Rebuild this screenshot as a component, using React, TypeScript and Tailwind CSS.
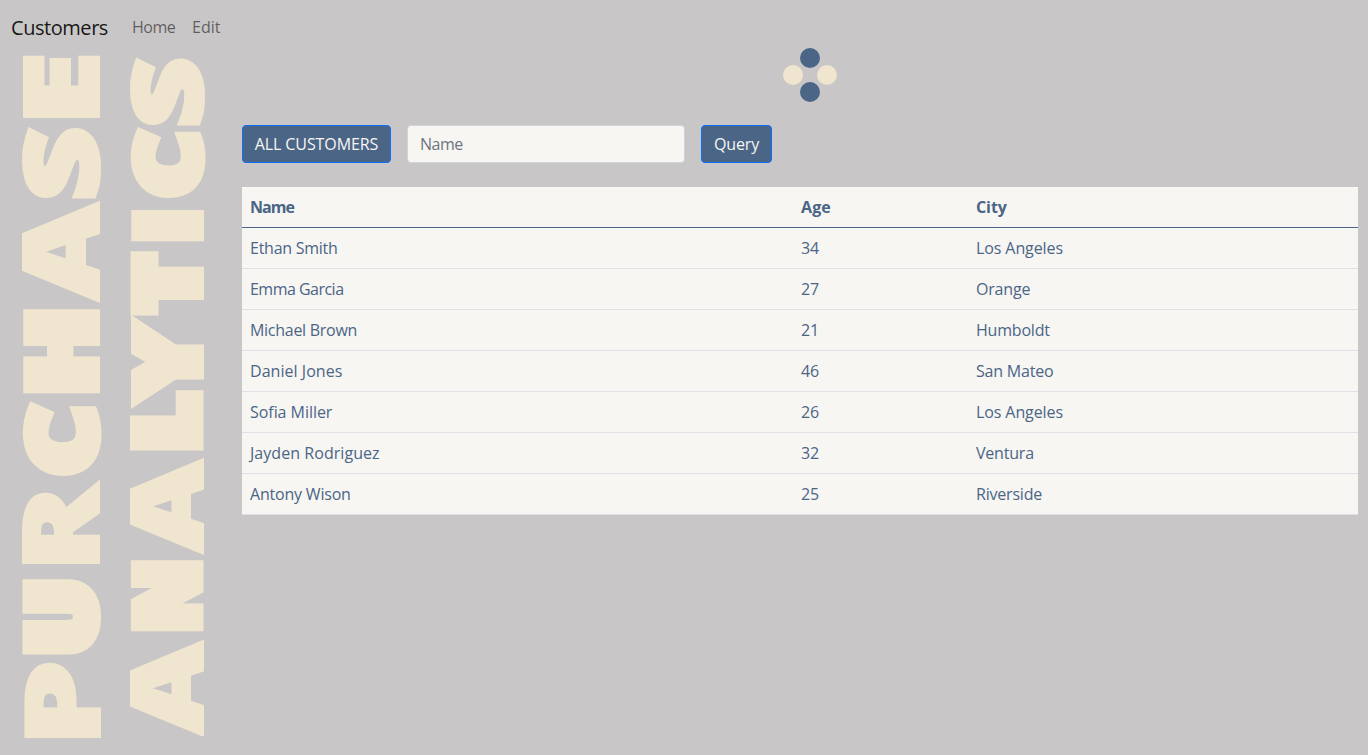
type Glyph = { char: string; start: number; end: number };

// Ink bounds of each capital as a fraction of the font size, and its outline weight in pixels.
const INK: Record<string, [number, number, number]> = {
  P: [0.07, 0.6, 3], U: [0.07, 0.69, 14], R: [0.07, 0.69, 4], C: [0.05, 0.62, 11], H: [0.07, 0.69, 12],
  A: [0, 0.73, 4], S: [0.04, 0.55, 6], E: [0.07, 0.51, 6], N: [0.07, 0.76, 13], L: [0.07, 0.55, 15],
  Y: [0, 0.67, 12], T: [0.02, 0.57, 15], I: [0.07, 0.28, 8],
};

const CAP_HEIGHT = 0.714;

// Start and end of each letter along the banner's baseline, in pixels.
const PURCHASE: Glyph[] = [
  { char: 'P', start: 0, end: 77 },
  { char: 'U', start: 84, end: 160.3 },
  { char: 'R', start: 174, end: 257.3 },
  { char: 'C', start: 263.3, end: 336.5 },
  { char: 'H', start: 345, end: 430 },
  { char: 'A', start: 437.5, end: 538.3 },
  { char: 'S', start: 540.3, end: 612 },
  { char: 'E', start: 620.5, end: 684.8 },
];

const ANALYTICS: Glyph[] = [
  { char: 'A', start: 3.3, end: 99.3 },
  { char: 'N', start: 107, end: 179 },
  { char: 'A', start: 185.5, end: 281.3 },
  { char: 'L', start: 288.3, end: 349.5 },
  { char: 'Y', start: 334.7, end: 419.7 },
  { char: 'T', start: 423, end: 488 },
  { char: 'I', start: 497, end: 530 },
  { char: 'C', start: 541, end: 610.7 },
  { char: 'S', start: 613.5, end: 681.7 },
];

function Banner({ glyphs, cap, className }: { glyphs: Glyph[]; cap: number; className: string }) {
  return (
    <h1
      className={`h-[684px] rotate-180 whitespace-nowrap font-['Open_Sans',sans-serif] font-extrabold leading-[108px] text-[#f0e5cf] [writing-mode:vertical-rl] ${className}`}
      style={{ fontSize: cap }}
    >
      {glyphs.map((g, i) => {
        const [l, r, stroke] = INK[g.char];
        const size = (cap - stroke) / CAP_HEIGHT;
        const scale = (g.end - g.start) / ((r - l) * size + stroke);
        const previous = i ? glyphs[i - 1].end : 0;
        return (
          <span
            key={i}
            className="inline-block origin-top"
            style={{
              fontSize: size,
              WebkitTextStroke: `${stroke}px #f0e5cf`,
              height: g.end - g.start,
              marginTop: g.start - previous,
              transform: `scaleY(${scale}) translateY(${stroke / 2 - l * size}px)`,
            }}
          >
            {g.char}
          </span>
        );
      })}
    </h1>
  );
}

const customers = [
  { name: 'Ethan Smith', age: 34, city: 'Los Angeles' },
  { name: 'Emma Garcia', age: 27, city: 'Orange' },
  { name: 'Michael Brown', age: 21, city: 'Humboldt' },
  { name: 'Daniel Jones', age: 46, city: 'San Mateo' },
  { name: 'Sofia Miller', age: 26, city: 'Los Angeles' },
  { name: 'Jayden Rodriguez', age: 32, city: 'Ventura' },
  { name: 'Antony Wison', age: 25, city: 'Riverside' },
];

const spacing: Record<string, string> = {
  'Ethan Smith': 'tracking-[-0.26px]',
  'Emma Garcia': 'tracking-[-0.52px]',
  'Michael Brown': 'tracking-[-0.28px]',
  'Daniel Jones': 'tracking-[0.04px]',
  'Sofia Miller': 'tracking-[-0.05px]',
  'Jayden Rodriguez': 'tracking-[0.05px]',
  'Los Angeles': 'tracking-[-0.1px]',
};

function Logo() {
  return (
    <div className="mx-auto grid h-[54px] w-[54px] rotate-45 grid-cols-[20px_20px] place-content-center gap-1">
      <span className="size-5 rounded-full bg-[#4b6587]" />
      <span className="size-5 rounded-full bg-[#f0e5cf]" />
      <span className="size-5 rounded-full bg-[#f0e5cf]" />
      <span className="size-5 rounded-full bg-[#4b6587]" />
    </div>
  );
}

export default function App() {
  return (
    <div className="flex h-[755px] flex-col overflow-hidden bg-[#c8c6c6] font-['Open_Sans',sans-serif] text-base">
      <nav className="flex h-12 shrink-0 items-center pl-[11px] pt-2">
        <a className="w-[121px] text-xl tracking-[-0.45px] text-black/90">Customers</a>
        <a className="mb-0.5 w-[60px] tracking-[-0.5px] text-black/55">Home</a>
        <a className="mb-0.5 text-black/55">Edit</a>
      </nav>
      <div className="flex">
        <aside className="flex w-[242px] shrink-0 pl-[4.5px] pt-[7px]">
          <Banner glyphs={PURCHASE} cap={77} className="w-[108px]" />
          <Banner glyphs={ANALYTICS} cap={73} className="-ml-[2px] w-[108px]" />
        </aside>
        <main className="w-[1116px]">
          <div className="w-[1136px]">
            <Logo />
          </div>
          <form className="mt-[23px] flex gap-4">
            <button type="button" className="h-[38px] w-[149px] rounded border border-[#0d6efd] bg-[#4b6587] tracking-[-0.1px] text-[#f7f6f2]">
              ALL CUSTOMERS
            </button>
            <input
              placeholder="Name"
              className="h-[38px] w-[278px] rounded border border-[#ced4da] bg-[#f7f6f2] px-3 tracking-[-0.5px] placeholder:text-[#6c757d]"
            />
            <button type="button" className="h-[38px] w-[71px] rounded border border-[#0d6efd] bg-[#4b6587] tracking-[-0.15px] text-[#f7f6f2]">
              Query
            </button>
          </form>
          <table className="mt-6 w-full table-fixed border-collapse bg-[#f7f6f2] text-left tracking-[-0.2px] text-[#4b6587]">
            <colgroup>
              <col className="w-[551px]" />
              <col className="w-[175px]" />
              <col />
            </colgroup>
            <thead>
              <tr className="h-10 border-b border-[#4b6587]">
                <th className="px-2 font-bold tracking-[-0.95px]">Name</th>
                <th className="px-2 font-bold tracking-[0.1px]">Age</th>
                <th className="px-2 font-bold tracking-[-0.1px]">City</th>
              </tr>
            </thead>
            <tbody>
              {customers.map((c) => (
                <tr key={c.name} className="h-[41px] border-b border-[#dee2e6]">
                  <td className={`px-2 ${spacing[c.name] ?? ''}`}>{c.name}</td>
                  <td className="px-2">{c.age}</td>
                  <td className={`px-2 ${spacing[c.city] ?? ''}`}>{c.city}</td>
                </tr>
              ))}
            </tbody>
          </table>
        </main>
      </div>
    </div>
  );
}
